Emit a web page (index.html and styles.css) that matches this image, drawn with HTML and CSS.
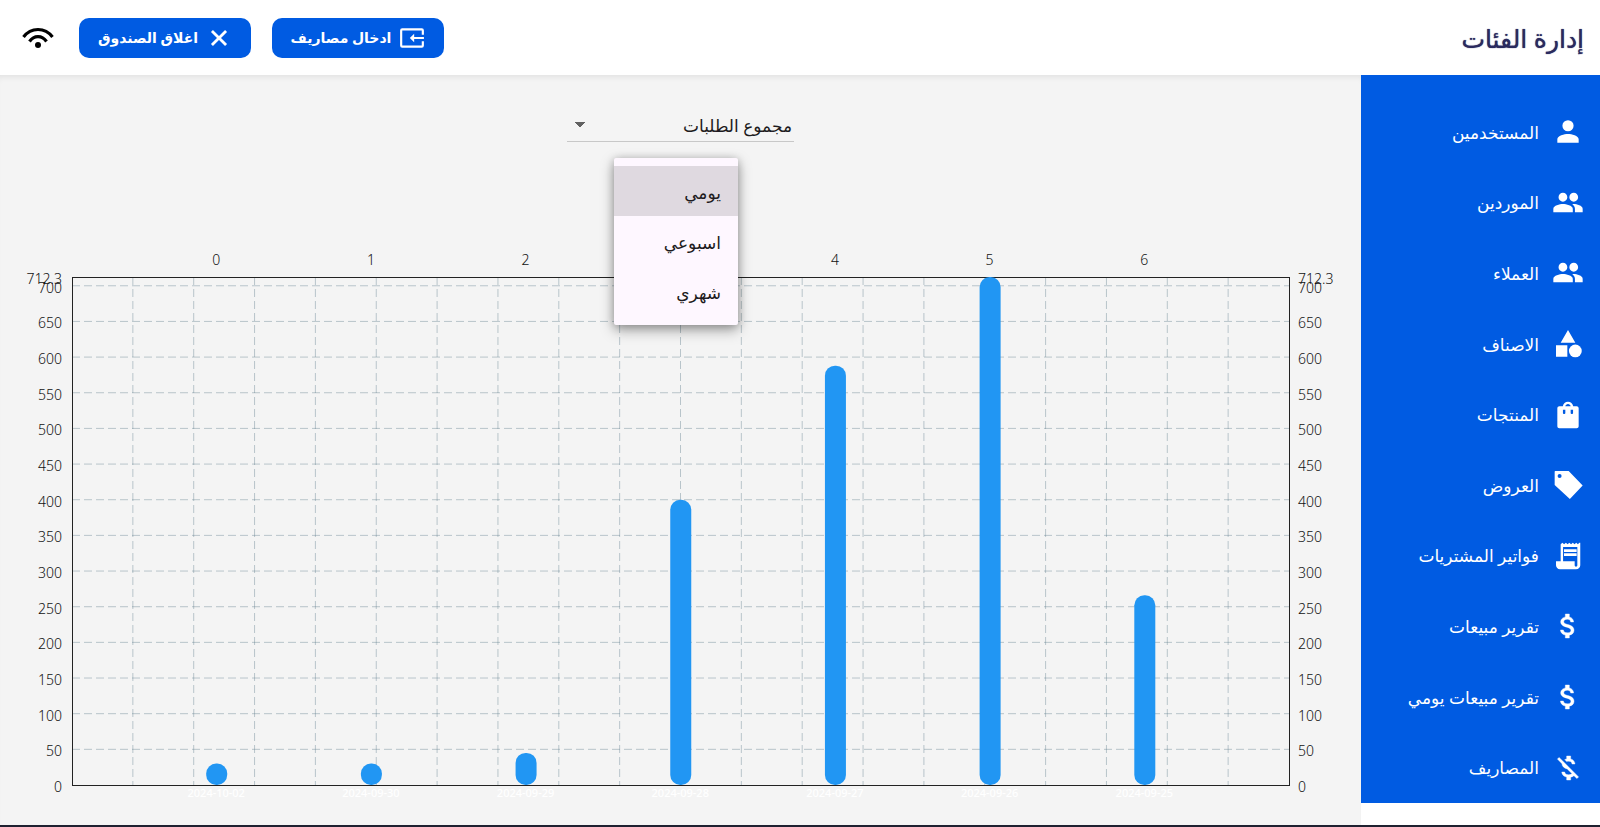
FILE: index.html
```html
<!DOCTYPE html>
<html lang="ar" dir="rtl">
<head>
<meta charset="utf-8">
<title>إدارة الفئات</title>
<link rel="stylesheet" href="styles.css">
</head>
<body>
<header class="topbar">
  <h1 class="title">إدارة الفئات</h1>
  <div class="actions">
    <button class="btn" type="button">
      <svg class="btn-icon" viewBox="0 0 24 24" aria-hidden="true"><path fill="none" stroke="currentColor" stroke-width="2" d="M22 9V5q0-1-1-1H3Q2 4 2 5v14q0 1 1 1h18q1 0 1-1v-4"/><path fill="currentColor" d="M23 11v2h-9v3l-4-4 4-4v3z"/></svg>
      <span>ادخال مصاريف</span>
    </button>
    <button class="btn" type="button">
      <svg class="btn-icon" viewBox="0 0 24 24" aria-hidden="true"><path fill="none" stroke="currentColor" stroke-width="2.600" d="M5.500 5.500l13 13M18.500 5.500l-13 13"/></svg>
      <span>اغلاق الصندوق</span>
    </button>
    <svg class="wifi" viewBox="0 0 32 24" aria-hidden="true"><g fill="none" stroke="#000" stroke-width="3.200"><path d="M1.500 11C9 1 23 1 30.500 11"/><path d="M7.500 15.500C12 9 20 9 24.500 15.500"/></g><circle cx="16" cy="19" r="3"/></svg>
  </div>
</header>
<div class="layout">
  <nav class="sidebar">
    <a class="nav-item" href="#"><svg class="nav-icon" viewBox="0 0 24 24" aria-hidden="true"><path d="M12 11.500a4.200 4.200 0 1 0 0-8.400 4.200 4.200 0 0 0 0 8.400zm0 2c-2.670 0-8 1.340-8 4V20h16v-2.500c0-2.660-5.330-4-8-4z"/></svg>المستخدمين</a>
    <a class="nav-item" href="#"><svg class="nav-icon" viewBox="0 0 24 24" aria-hidden="true"><path d="M16.300 11c1.800 0 3.300-1.500 3.300-3.300S18.100 4.400 16.300 4.400 13 5.900 13 7.700s1.500 3.300 3.300 3.300zM8.200 11c1.800 0 3.300-1.500 3.300-3.300S10 4.400 8.200 4.400 4.900 5.900 4.900 7.700 6.400 11 8.200 11zm0 1.800c-2.330 0-7.200 1.170-7.200 3.500V19h14.600v-2.700c0-2.330-5.070-3.500-7.400-3.500zm8 0c-.29 0-.62.02-.97.05 1.160.84 1.970 1.970 1.970 3.450V19H23v-2.700c0-2.330-4.470-3.500-6.800-3.500z"/></svg>الموردين</a>
    <a class="nav-item" href="#"><svg class="nav-icon" viewBox="0 0 24 24" aria-hidden="true"><path d="M16.300 11c1.800 0 3.300-1.500 3.300-3.300S18.100 4.400 16.300 4.400 13 5.900 13 7.700s1.500 3.300 3.300 3.300zM8.200 11c1.800 0 3.300-1.500 3.300-3.300S10 4.400 8.200 4.400 4.900 5.900 4.900 7.700 6.400 11 8.200 11zm0 1.800c-2.330 0-7.200 1.170-7.200 3.500V19h14.600v-2.700c0-2.330-5.070-3.500-7.400-3.500zm8 0c-.29 0-.62.02-.97.05 1.160.84 1.970 1.970 1.970 3.450V19H23v-2.700c0-2.330-4.470-3.500-6.800-3.500z"/></svg>العملاء</a>
    <a class="nav-item" href="#"><svg class="nav-icon" viewBox="0 0 24 24" aria-hidden="true"><path d="M12 1.500L6.500 11h11zM3 13h8.500v8.500H3z"/><circle cx="17.500" cy="17.200" r="4.800"/></svg>الاصناف</a>
    <a class="nav-item" href="#"><svg class="nav-icon" viewBox="0 0 24 24" aria-hidden="true"><path fill-rule="evenodd" d="M18.500 5.500h-2.600C15.600 3.500 14 2 12 2S8.400 3.500 8.100 5.500H5.500C4.700 5.500 4 6.200 4 7v13.500c0 .8.700 1.500 1.500 1.500h13c.8 0 1.500-.7 1.500-1.500V7c0-.8-.7-1.500-1.500-1.500zM10 10.500c0 .5-.4.800-.9.800s-.9-.3-.9-.8V8H10zm0-5c.2-1 1-1.700 2-1.700s1.800.7 2 1.700zm5.800 5c0 .5-.4.800-.9.800s-.9-.3-.9-.8V8h1.800z"/></svg>المنتجات</a>
    <a class="nav-item" href="#"><svg class="nav-icon" viewBox="0 0 24 24" aria-hidden="true"><path fill-rule="evenodd" d="M2.500 1.500h10L23 12.300 13.400 22.500 2 12V2q0-.5.500-.5zM5.700 3.800a1.500 1.500 0 1 0 0 3 1.500 1.500 0 0 0 0-3z"/></svg>العروض</a>
    <a class="nav-item" href="#"><svg class="nav-icon" viewBox="0 0 24 24" aria-hidden="true"><path d="M20.500 2l-1.100 1.200L18.200 2l-1.300 1.200L15.600 2l-1.300 1.200L13 2l-1.300 1.200L10.400 2 9.100 3.200 7.800 2 6.500 3.200V16H3v3c0 1.660 1.340 3 3 3h12c1.900 0 3.200-1.300 3.200-3V2zM19 19c0 .55-.45 1-1 1s-1-.45-1-1v-3H8.300V5.200H19z"/><path d="M9 7h9.500v2H9zM9 10h9.500v2H9z"/></svg>فواتير المشتريات</a>
    <a class="nav-item" href="#"><svg class="nav-icon bold" viewBox="0 0 24 24" aria-hidden="true"><path d="M11.800 10.900c-2.270-.59-3-1.200-3-2.150 0-1.090 1.010-1.850 2.700-1.850 1.780 0 2.440.85 2.500 2.100h2.210c-.07-1.720-1.120-3.300-3.210-3.810V3h-3v2.160c-1.940.42-3.500 1.680-3.500 3.610 0 2.310 1.910 3.460 4.700 4.130 2.500.6 3 1.480 3 2.410 0 .69-.49 1.790-2.700 1.790-2.060 0-2.870-.92-2.980-2.100h-2.200c.12 2.190 1.760 3.420 3.680 3.830V21h3v-2.150c1.950-.37 3.500-1.500 3.500-3.550 0-2.840-2.430-3.810-4.700-4.400z"/></svg>تقرير مبيعات</a>
    <a class="nav-item" href="#"><svg class="nav-icon bold" viewBox="0 0 24 24" aria-hidden="true"><path d="M11.800 10.900c-2.270-.59-3-1.200-3-2.150 0-1.090 1.010-1.850 2.700-1.850 1.780 0 2.440.85 2.500 2.100h2.210c-.07-1.720-1.120-3.300-3.210-3.810V3h-3v2.160c-1.940.42-3.500 1.680-3.500 3.610 0 2.310 1.910 3.460 4.700 4.130 2.500.6 3 1.480 3 2.410 0 .69-.49 1.790-2.700 1.790-2.060 0-2.870-.92-2.980-2.100h-2.200c.12 2.190 1.760 3.420 3.680 3.830V21h3v-2.150c1.950-.37 3.500-1.500 3.500-3.550 0-2.840-2.430-3.810-4.700-4.400z"/></svg>تقرير مبيعات يومي</a>
    <a class="nav-item" href="#"><svg class="nav-icon bold" viewBox="0 0 24 24" aria-hidden="true"><path d="M12.500 6.900c1.780 0 2.440.85 2.500 2.100h2.210c-.07-1.720-1.120-3.300-3.210-3.810V3h-3v2.160c-.53.12-1.030.3-1.480.54l1.470 1.470c.41-.17.910-.27 1.510-.27zM5.330 4.060L4.060 5.330 7.500 8.770c0 2.080 1.560 3.210 3.910 3.910l3.510 3.510c-.34.49-1.050.91-2.420.91-2.060 0-2.870-.92-2.980-2.100h-2.200c.12 2.190 1.760 3.420 3.680 3.830V21h3v-2.150c.96-.18 1.820-.55 2.450-1.120l2.220 2.220 1.270-1.270L5.330 4.060z"/></svg>المصاريف</a>
  </nav>
  <main class="content">
    <div class="picker">
      <select class="picker-select" aria-label="مجموع الطلبات">
        <option>مجموع الطلبات</option>
      </select>
      <ul class="menu" role="listbox" aria-label="الفترة">
        <li class="menu-item selected" role="option" aria-selected="true">يومي</li>
        <li class="menu-item" role="option" aria-selected="false">اسبوعي</li>
        <li class="menu-item" role="option" aria-selected="false">شهري</li>
      </ul>
    </div>
    <div class="chart">
      <svg class="plot" id="plot" role="img" aria-label="مجموع الطلبات"></svg>
    </div>
  </main>
</div>
<script src="chart.js"></script>
</body>
</html>
```
FILE: styles.css
```css
* { box-sizing: border-box; }

body {
  margin: 0;
  min-height: 100vh;
  display: flex;
  flex-direction: column;
  background: #fff;
  border-bottom: 2px solid #1f2130;
  font-family: "Noto Sans", "DejaVu Sans", sans-serif;
  color: #1d1b20;
}

.topbar {
  display: flex;
  align-items: center;
  justify-content: space-between;
  height: 75px;
  padding: 0 16px 0 22px;
  background: #fff;
}

.title {
  margin: 0;
  font-size: 25px;
  font-weight: 500;
  color: #2a2a5e;
  text-shadow: 0 0 1px #2a2a5e;
}

.actions {
  display: flex;
  align-items: center;
  gap: 21px;
}

.btn {
  display: flex;
  align-items: center;
  justify-content: center;
  gap: 8px;
  width: 172px;
  height: 40px;
  padding: 0;
  border: 0;
  border-radius: 10px;
  background: #005be2;
  color: #fff;
  font: bold 14px "Noto Sans", "DejaVu Sans", sans-serif;
}

.btn-icon { width: 26px; height: 26px; }

.wifi { width: 32px; height: 24px; margin-right: 4px; }

.layout {
  flex: 1;
  display: flex;
}

.sidebar {
  display: flex;
  flex-direction: column;
  width: 239px;
  margin-bottom: 22px;
  padding-top: 22px;
  background: #005be2;
}

.nav-item {
  flex: 1;
  display: flex;
  align-items: center;
  gap: 13px;
  padding: 0 16px;
  color: #fff;
  font-size: 17px;
  text-decoration: none;
}

.nav-icon {
  width: 32px;
  height: 32px;
  fill: #fff;
}

.bold {
  stroke: #fff;
  stroke-width: 0.3;
}

.content {
  flex: 1;
  display: flex;
  flex-direction: column;
  align-items: center;
  padding: 34px 0 38px;
  background: #f4f4f4;
  box-shadow: inset 0 6px 6px -4px rgba(0, 0, 0, 0.08);
}

.picker {
  position: relative;
  width: 227px;
}

.picker-select {
  appearance: none;
  width: 100%;
  height: 33px;
  padding: 0 2px;
  border: 0;
  border-bottom: 1px solid #c8c8c8;
  border-radius: 0;
  background: linear-gradient(to top right, transparent 50%, #616161 52%) 7px 13px / 6px 6px no-repeat,
    linear-gradient(to top left, transparent 50%, #616161 52%) 13px 13px / 6px 6px no-repeat;
  color: #1d1b20;
  font: 17px "Noto Sans", "DejaVu Sans", sans-serif;
}

.menu {
  position: absolute;
  top: 49px;
  right: 56px;
  z-index: 1;
  width: 124px;
  margin: 0;
  padding: 8px 0 9px;
  border-radius: 2px;
  background: #fef7ff;
  box-shadow: 0 5px 14px rgba(0, 0, 0, 0.35), 0 1px 8px rgba(0, 0, 0, 0.2);
  list-style: none;
}

.menu-item {
  height: 50px;
  padding: 0 17px;
  font-size: 17px;
  line-height: 54px;
}

.selected { background: #dfd9e0; }

.chart {
  flex: 1;
  align-self: stretch;
  display: flex;
  margin-top: 135px;
  padding: 0 72px;
}

.plot {
  flex: 1;
  height: 508px;
  overflow: visible;
  direction: ltr;
}

.frame { fill: none; stroke: #222; shape-rendering: crispEdges; }
.grid { stroke: #607d8b; stroke-opacity: 0.4; stroke-dasharray: 8 4; }
.bar { fill: #2196f3; }
.axis { fill: #111; font: 300 14px "Noto Sans", "Open Sans", sans-serif; }
.start { text-anchor: start; }
.middle { text-anchor: middle; }
.end { text-anchor: end; }
.date { fill: #fff; font: 500 11px "Noto Sans", "Open Sans", sans-serif; }
```
FILE: chart.js
```javascript
const NS = "http://www.w3.org/2000/svg";
const plot = document.getElementById("plot");
const max = 712.3;
const orders = [
  ["2024-10-02", 30],
  ["2024-09-30", 30],
  ["2024-09-29", 45],
  ["2024-09-28", 400],
  ["2024-09-27", 588],
  ["2024-09-26", 712.3],
  ["2024-09-25", 266]
];

function add(parent, name, attrs, text) {
  const node = document.createElementNS(NS, name);
  for (const key in attrs) node.setAttribute(key, attrs[key]);
  if (text !== undefined) node.textContent = text;
  parent.appendChild(node);
  return node;
}

const level = (value) => (1 - value / max) * 100 + "%";

for (let i = 1; i < 20; i++) {
  add(plot, "line", { class: "grid", x1: i * 5 + "%", x2: i * 5 + "%", y1: 0, y2: "100%" });
}

for (const value of [0, 50, 100, 150, 200, 250, 300, 350, 400, 450, 500, 550, 600, 650, 700, max]) {
  const y = level(value);
  if (value > 0 && value < max) {
    add(plot, "line", { class: "grid", x1: 0, x2: "100%", y1: y, y2: y });
  }
  add(plot, "text", { class: "axis end", x: 0, y, dx: -10, dy: 7 }, value);
  add(plot, "text", { class: "axis start", x: "100%", y, dx: 9, dy: 7 }, value);
}

add(plot, "rect", { class: "frame", width: "100%", height: "100%" });

orders.forEach(([date, value], i) => {
  const x = 11.85 + i * 12.71 + "%";
  const column = add(plot, "svg", { x, overflow: "visible" });
  add(column, "rect", { class: "bar", x: -10, y: level(value), width: 21, height: (value / max) * 100 + "%", rx: 10 });
  add(column, "text", { class: "axis middle", y: 0, dy: -12 }, i);
  add(column, "text", { class: "date middle", y: "100%", dy: 12 }, date);
});
```
